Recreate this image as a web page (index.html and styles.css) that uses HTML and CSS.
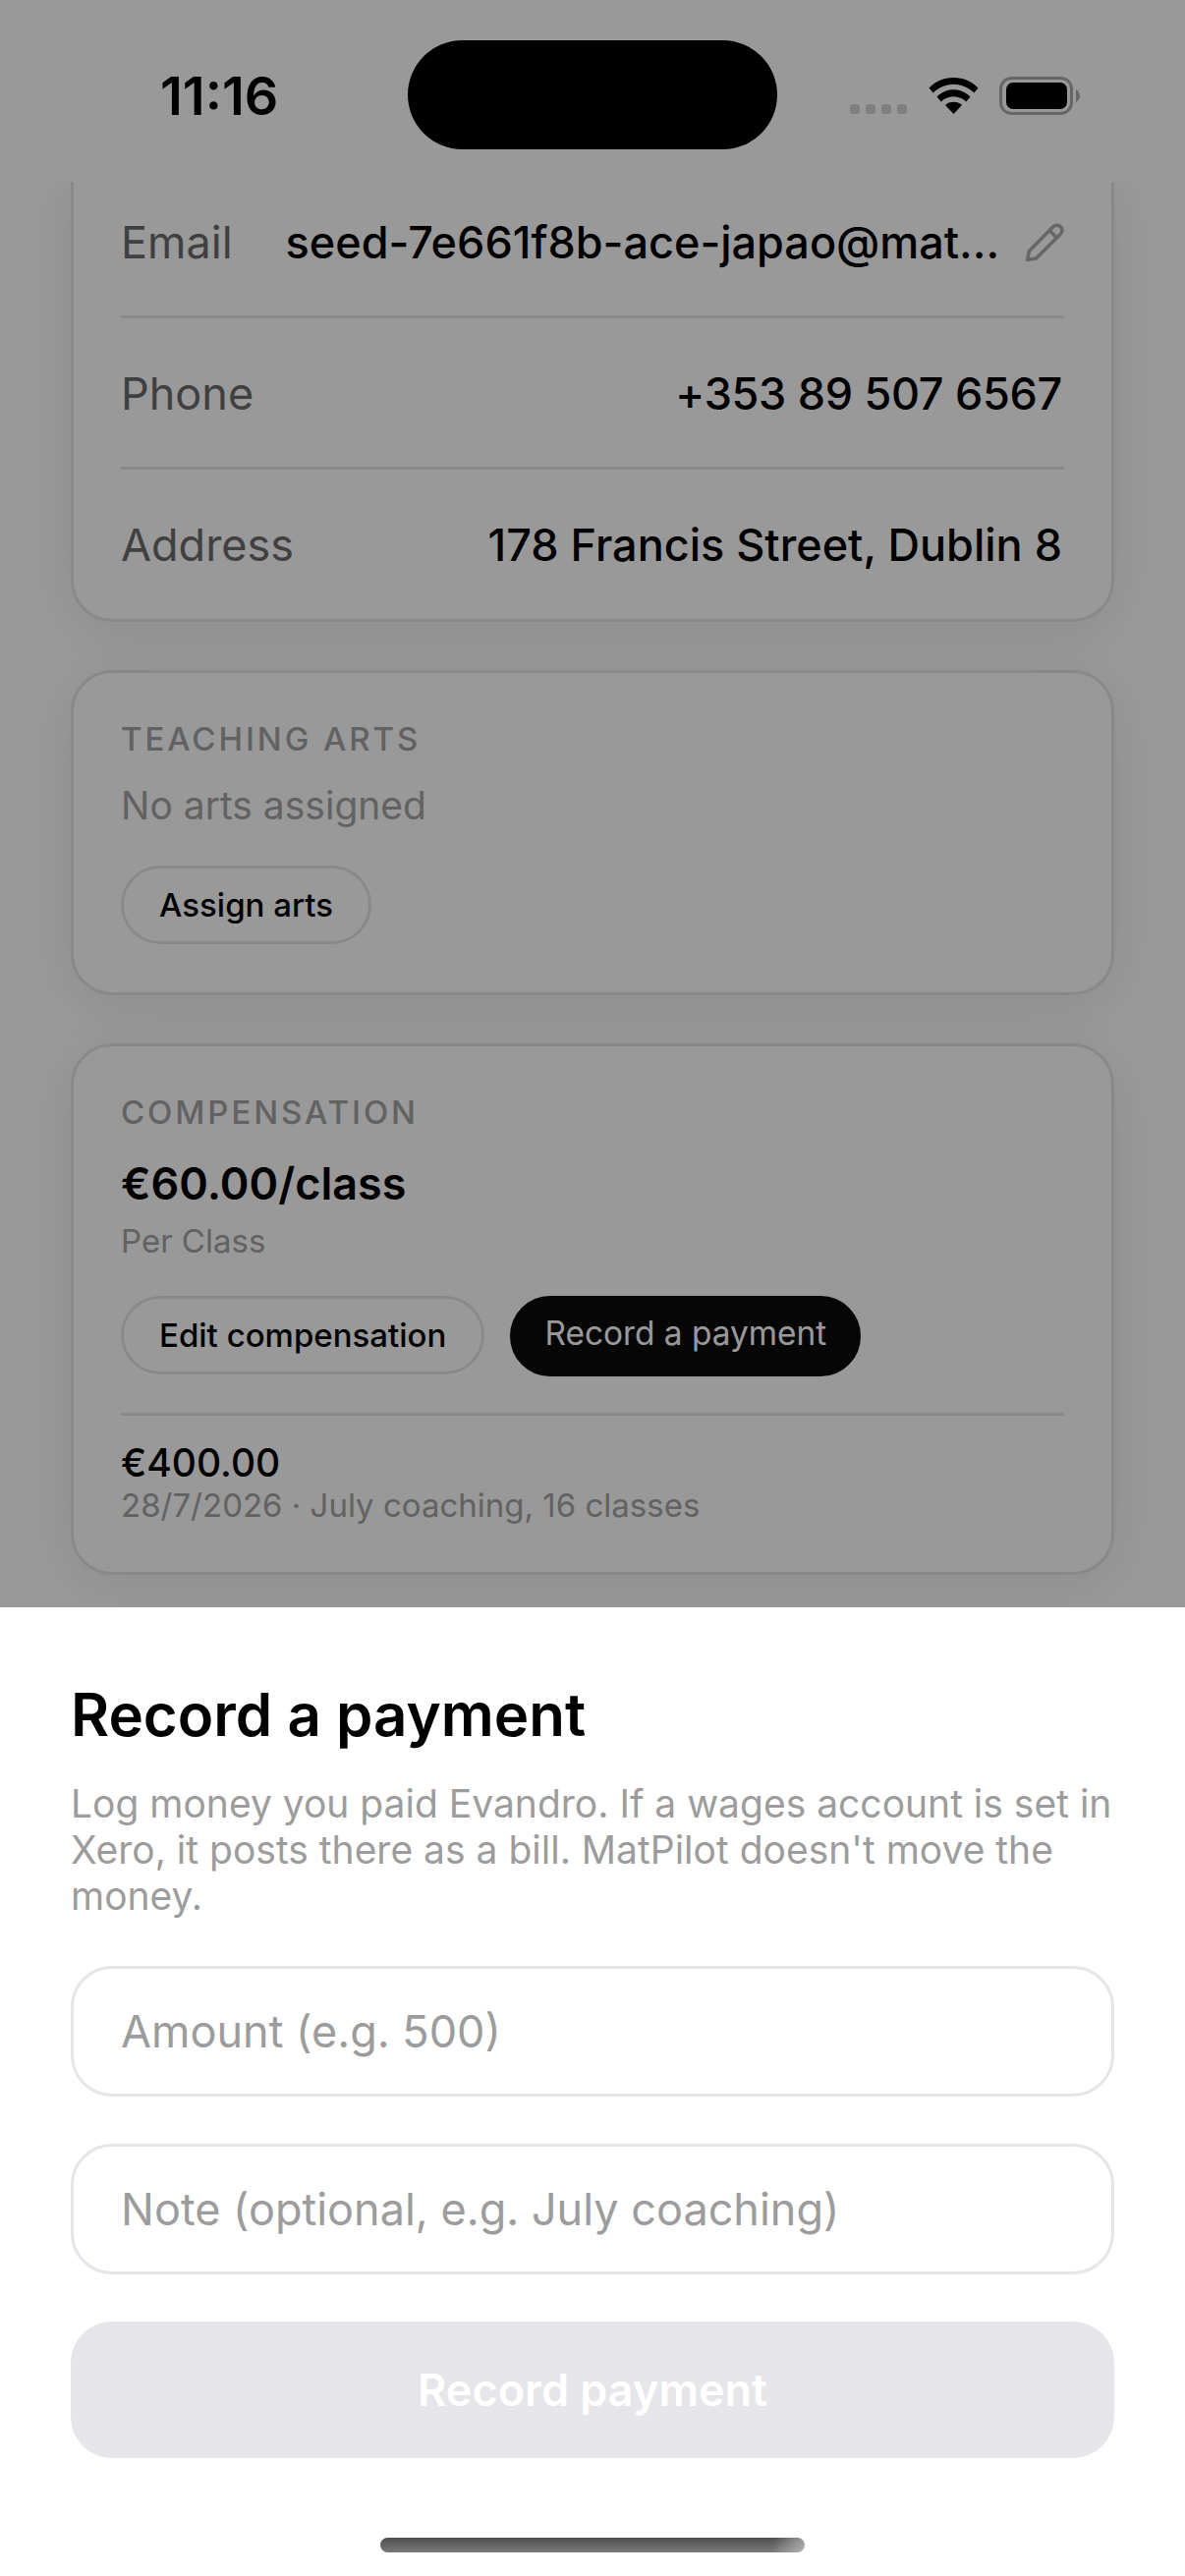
FILE: index.html
```html
<!DOCTYPE html>
<html lang="en">
<head>
<meta charset="utf-8">
<title>Record a payment</title>
<link rel="stylesheet" href="styles.css">
</head>
<body>
<div class="phone">
  <header class="status">
    <span class="clock">11:16</span>
    <span class="island"></span>
    <div class="status-icons">
      <span class="signal"><i></i><i></i><i></i><i></i></span>
      <svg class="wifi" width="51" height="37" viewBox="0 0 51 37" aria-hidden="true">
        <path d="M0.5 10.5C7 4 15.5 0 25.5 0S44 4 50.5 10.5L46.3 15.5C41 10.3 33.7 6.8 25.5 6.8S10 10.3 4.7 15.5Z"/>
        <path d="M8.5 19.5C13 15 19 12.3 25.5 12.3S38 15 42.5 19.5L38.2 24.5C35 21.3 30.5 19.2 25.5 19.2S16 21.3 12.8 24.5Z"/>
        <path d="M17 28C19.3 26 22.2 24.8 25.5 24.8S31.7 26 34 28L25.5 37Z"/>
      </svg>
      <svg class="battery" width="82" height="39" viewBox="0 0 82 39" aria-hidden="true">
        <rect class="battery-case" x="1.5" y="1.5" width="72" height="36" rx="11"/>
        <rect x="7" y="6" width="62" height="27" rx="7"/>
        <path class="battery-nub" d="M78 13C80.5 14.5 82 17 82 19.5S80.5 24.500 78 26Z"/>
      </svg>
    </div>
  </header>

  <main class="profile">
    <section class="card card-contact">
      <div class="row">
        <span class="row-label">Email</span>
        <span class="row-value row-email">seed-7e661f8b-ace-japao@mat...</span>
        <svg class="pencil" width="40" height="40" viewBox="0 0 40 40" aria-hidden="true">
          <path d="M2.500 37.500L4.500 28.500L28.500 4C30.800 1.700 34 1.500 36.300 3.800C38.600 6.100 38.400 9.300 36 11.600L11.500 36Z"/>
          <path d="M25 7.500L32.500 15"/>
        </svg>
      </div>
      <div class="row">
        <span class="row-label">Phone</span>
        <span class="row-value row-phone">+353 89 507 6567</span>
      </div>
      <div class="row">
        <span class="row-label">Address</span>
        <span class="row-value">178 Francis Street, Dublin 8</span>
      </div>
    </section>

    <section class="card card-arts">
      <h2 class="eyebrow">TEACHING ARTS</h2>
      <p class="muted">No arts assigned</p>
      <div class="actions">
        <button class="pill">Assign arts</button>
      </div>
    </section>

    <section class="card card-pay">
      <h2 class="eyebrow">COMPENSATION</h2>
      <p class="rate">€60.00/class</p>
      <p class="rate-kind">Per Class</p>
      <div class="actions actions-pay">
        <button class="pill">Edit compensation</button>
        <button class="pill pill-dark">Record a payment</button>
      </div>
      <div class="payment">
        <p class="payment-amount">€400.00</p>
        <p class="payment-note">28/7/2026 · July coaching, 16 classes</p>
      </div>
    </section>
    <div class="scrim"></div>
  </main>

  <section class="sheet">
    <h1 class="sheet-title">Record a payment</h1>
    <p class="sheet-text">Log money you paid Evandro. If a wages account is set in Xero, it posts there as a bill. MatPilot doesn't move the money.</p>
    <input class="field" type="text" placeholder="Amount (e.g. 500)">
    <input class="field" type="text" placeholder="Note (optional, e.g. July coaching)">
    <button class="submit">Record payment</button>
    <span class="home-bar"></span>
  </section>
</div>
</body>
</html>
```

FILE: styles.css
```css
* { box-sizing: border-box; }

html, body {
  margin: 0;
  padding: 0;
  background: #fff;
}

body {
  font-family: Inter, "Liberation Sans", sans-serif;
  color: #000;
}

h1, h2, p { margin: 0; font-weight: 400; }

.phone {
  position: relative;
  width: 1206px;
  height: 2622px;
  overflow: hidden;
  display: flex;
  flex-direction: column;
  background: #fff;
}

/* status bar */
.status {
  position: relative;
  z-index: 3;
  flex: none;
  height: 185px;
  background: #999;
  display: flex;
  align-items: center;
}

.clock {
  position: absolute;
  left: 163px;
  top: 67px;
  font-size: 54px;
  line-height: 62px;
  font-weight: 600;
}

.island {
  position: absolute;
  left: 415px;
  top: 41px;
  width: 376px;
  height: 111px;
  border-radius: 56px;
  background: #000;
}

.status-icons {
  position: absolute;
  left: 865px;
  top: 78px;
  display: flex;
  align-items: flex-end;
}

.signal {
  display: flex;
  gap: 6px;
  margin-right: 22px;
  margin-bottom: 1px;
}

.signal i {
  width: 10px;
  height: 10px;
  border-radius: 3px;
  background: #7f7f7f;
}

.wifi { margin-right: 21px; margin-bottom: 1px; }
.wifi path { fill: #000; }
.battery-case { fill: none; stroke: #666; stroke-width: 3; }
.battery-nub { fill: #666; }

/* dimmed profile page behind the sheet */
.profile {
  position: relative;
  flex: none;
  height: 1451px;
  overflow: hidden;
  padding: 0 72px;
  display: flex;
  flex-direction: column;
  gap: 49px;
}

.scrim {
  position: absolute;
  inset: 0;
  background: rgba(0, 0, 0, 0.4);
}

.card {
  flex: none;
  background: #fff;
  border: 3px solid #e5e5ea;
  border-radius: 42px;
  box-shadow: 0 10px 60px rgba(0, 0, 0, 0.08);
  padding: 0 48px;
}

.card-contact {
  height: 463px;
  margin-top: -15px;
  border-top: 0;
  border-top-left-radius: 0;
  border-top-right-radius: 0;
}

.row {
  height: 154px;
  display: flex;
  align-items: center;
  justify-content: space-between;
  padding-top: 2px;
  border-bottom: 3px solid #e5e5ea;
  font-size: 45px;
}

.row:last-child { border-bottom: 0; padding-top: 0; padding-bottom: 2px; }

.row-label { color: #6b6b6b; }
.row-value { color: #000; font-weight: 500; margin-right: 2px; }
.row-phone { letter-spacing: -0.3px; }
.row-email { margin-left: 54px; margin-right: 26px; flex: 1; white-space: nowrap; }

.pencil { flex: none; margin-right: 1px; }
.pencil path { fill: none; stroke: #aaa; stroke-width: 3.5; stroke-linejoin: round; stroke-linecap: round; }

.eyebrow {
  font-size: 33px;
  line-height: 40px;
  letter-spacing: 2.9px;
  font-weight: 500;
  color: #a3a3a3;
}

.muted {
  margin-top: 21px;
  font-size: 39px;
  line-height: 54px;
  color: #a3a3a3;
}

.card-arts {
  height: 331px;
  padding-top: 47px;
}

.actions {
  display: flex;
  align-items: flex-start;
  gap: 26px;
  margin-top: 34px;
}

.pill {
  height: 80px;
  padding: 0 36px;
  border: 3px solid #e5e5ea;
  border-radius: 41px;
  background: transparent;
  font-family: inherit;
  font-size: 33px;
  font-weight: 500;
  color: #000;
}

.pill-dark {
  height: 82px;
  padding: 0 32px 6px;
  background: #0a0a0a;
  border-color: #0a0a0a;
  font-size: 33.4px;
  color: #fff;
  font-weight: 400;
}

.card-pay {
  height: 541px;
  padding-top: 47px;
}

.rate {
  margin-top: 23px;
  font-size: 45px;
  line-height: 60px;
  font-weight: 600;
}

.rate-kind {
  margin-top: 6px;
  font-size: 33px;
  line-height: 44px;
  color: #a3a3a3;
}

.actions-pay { margin-top: 34px; }

.payment {
  margin-top: 37px;
  padding-top: 24px;
  border-top: 3px solid #e5e5ea;
}

.payment-amount {
  font-size: 39px;
  line-height: 48px;
  font-weight: 500;
}

.payment-note {
  font-size: 33px;
  line-height: 39px;
  color: #a3a3a3;
}

/* bottom sheet */
.sheet {
  position: relative;
  flex: 1;
  background: #fff;
  padding: 73px 72px 0;
  display: flex;
  flex-direction: column;
}

.sheet-title {
  font-size: 60px;
  line-height: 72px;
  font-weight: 600;
}

.sheet-text {
  margin-top: 31px;
  font-size: 39px;
  line-height: 47px;
  color: #9c9c9c;
}

.field {
  flex: none;
  height: 133px;
  width: 100%;
  margin-top: 48px;
  padding: 0 48px;
  border: 3px solid #e5e5ea;
  border-radius: 42px;
  background: #fff;
  outline: none;
  font-family: inherit;
  font-size: 45px;
  color: #000;
}

.field::placeholder { color: #9c9c9c; opacity: 1; }

.submit {
  flex: none;
  height: 139px;
  width: 100%;
  margin-top: 48px;
  border: 0;
  border-radius: 42px;
  background: #e5e5ea;
  font-family: inherit;
  font-size: 45px;
  font-weight: 600;
  color: #fff;
}

.home-bar {
  position: absolute;
  left: 387px;
  top: 947px;
  width: 432px;
  height: 15px;
  border-radius: 8px;
  background:
    linear-gradient(100deg, transparent 92%, rgba(255, 255, 255, 0.45)),
    linear-gradient(180deg, #4f4f4f, #7a7a7a);
}
```
